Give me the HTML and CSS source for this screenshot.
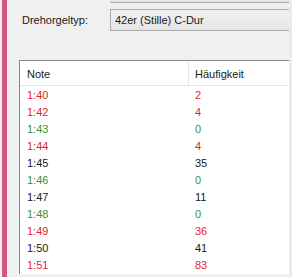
FILE: index.html
```html
<!DOCTYPE html>
<html lang="de">
<head>
    <meta charset="UTF-8">
    <title>Drehorgel Statistik</title>
    <link rel="stylesheet" href="styles.css">
</head>
<body>
    <div class="page">
        <div class="accent"></div>
        <div class="main">
            <div class="above"></div>

            <div class="type-row">
                <label class="type-label">Drehorgeltyp:</label>
                <div class="combo">42er (Stille) C-Dur</div>
            </div>

            <div class="list">
                <div class="list-head">
                    <div class="col-note">Note</div>
                    <div class="col-count">Häufigkeit</div>
                </div>
                <div class="row red"><div class="col-note">1:40</div><div class="col-count">2</div></div>
                <div class="row red"><div class="col-note">1:42</div><div class="col-count">4</div></div>
                <div class="row green"><div class="col-note">1:43</div><div class="col-count">0</div></div>
                <div class="row red"><div class="col-note">1:44</div><div class="col-count">4</div></div>
                <div class="row"><div class="col-note">1:45</div><div class="col-count">35</div></div>
                <div class="row green"><div class="col-note">1:46</div><div class="col-count">0</div></div>
                <div class="row"><div class="col-note">1:47</div><div class="col-count">11</div></div>
                <div class="row green"><div class="col-note">1:48</div><div class="col-count">0</div></div>
                <div class="row red"><div class="col-note">1:49</div><div class="col-count">36</div></div>
                <div class="row"><div class="col-note">1:50</div><div class="col-count">41</div></div>
                <div class="row red"><div class="col-note">1:51</div><div class="col-count">83</div></div>
            </div>
        </div>
        <div class="edge"></div>
    </div>
</body>
</html>
```

FILE: styles.css
```css
body {
    margin: 0;
    background-color: #f0f0f0;
    font-family: 'Liberation Sans', Arial, sans-serif;
    font-size: 11px;
    color: #1a1a1a;
    overflow: hidden;
}

.page {
    display: flex;
    height: 277px;
    width: 292px;
}

.accent {
    margin-left: 2px;
    width: 5px;
    background-color: #d5587d;
}

.main {
    width: 270px;
    padding-left: 12px;
}

.edge {
    width: 1px;
    margin-left: 1px;
    background-color: #e2e2e2;
}

.above {
    margin-left: 91px;
    height: 2px;
    border-bottom: 1px solid #a9a9a9;
    background: #e6e6e6;
}

.type-row {
    display: flex;
    align-items: center;
    margin-top: 6px;
}

.type-label {
    width: 88px;
    padding-left: 3px;
}

.combo {
    flex: 1;
    height: 20px;
    line-height: 20px;
    padding-left: 4px;
    border: 1px solid #acacac;
    border-right: none;
    background: linear-gradient(#f2f2f2, #e5e5e5);
}

.list {
    margin-top: 29px;
    height: 213px;
    border: 1px solid #828790;
    border-bottom: none;
    border-right: none;
    background: white;
    overflow: hidden;
}

.list-head {
    display: flex;
    height: 24px;
    line-height: 26px;
    border-bottom: 1px solid #e5e5e5;
    margin-bottom: 1px;
}

.list-head .col-note {
    border-right: 1px solid #e5e5e5;
}

.row {
    display: flex;
    height: 17px;
    line-height: 17px;
}

.col-note {
    width: 161px;
    padding-left: 7px;
}

.col-count {
    padding-left: 6px;
}

.row .col-note {
    width: 162px;
}

.red {
    color: #e3242f;
}

.green {
    color: #3c8f35;
}
```
